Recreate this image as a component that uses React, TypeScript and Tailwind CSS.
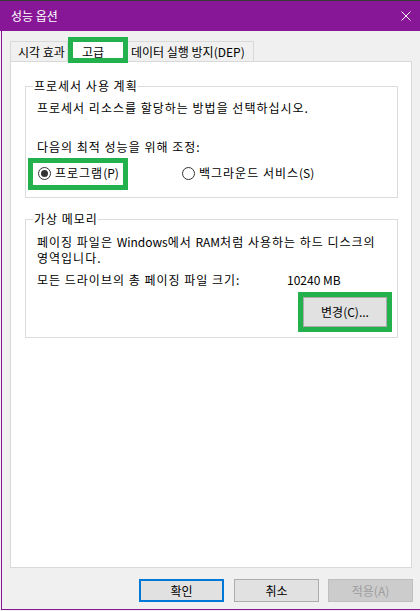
import React from 'react';

interface RadioProps {
  checked?: boolean;
  label: string;
  accel: string;
}

const Radio: React.FC<RadioProps> = ({ checked, label, accel }) => (
  <div className="flex items-center">
    <span className="ml-px flex h-[13px] w-[13px] items-center justify-center rounded-full border border-[#333333] bg-white">
      {checked && <span className="h-[7px] w-[7px] rounded-full bg-[#333333]" />}
    </span>
    <span className="ml-[4px] leading-[16px]">
      {label}
      <span className="tracking-normal">{accel}</span>
    </span>
  </div>
);

interface GroupProps {
  title: string;
  className: string;
  children: React.ReactNode;
}

const Group: React.FC<GroupProps> = ({ title, className, children }) => (
  <div className={`relative w-[373px] border border-[#dcdcdc] pl-[11px] ${className}`}>
    <span className="absolute -top-[9px] left-[7px] bg-white pl-px pr-0 leading-[16px]">{title}</span>
    {children}
  </div>
);

export default function App() {
  return (
    <div className="relative flex h-[611px] w-[420px] flex-col overflow-hidden bg-[#f0f0f0] font-['Noto_Sans_CJK_KR',sans-serif] text-[12px] text-black">
      {/* title bar */}
      <div className="flex h-[31px] shrink-0 items-center justify-between border-t border-[#3a3a3a] bg-[#881798] pl-[11px] pr-[9px] text-white">
        <span className="leading-[16px]">성능 옵션</span>
        <svg width="10" height="10" viewBox="0 0 10 10" className="mb-px">
          <path d="M0.5 0.5 L9.5 9.5 M9.5 0.5 L0.5 9.5" stroke="white" strokeWidth="1" />
        </svg>
      </div>

      <div className="mb-px ml-px flex flex-1 flex-col border-b border-l border-[#881798] px-[8px]">
        {/* tabs */}
        <div className="mt-[8px] flex h-[22px] items-end">
          <div className="h-[20px] w-[58px] border border-b-0 border-[#d9d9d9] pl-[7px] leading-[19px]">시각 효과</div>
          <div className="relative z-10 -mb-px h-[23px] w-[60px] border border-b-0 border-[#d9d9d9] bg-white pl-[13px] pt-[4px] leading-[16px]">
            고급
          </div>
          <div className="h-[20px] w-[126px] border border-b-0 border-l-0 border-[#d9d9d9] pl-[3px] leading-[19px]">
            데이터 실행 방지(DEP)
          </div>
        </div>

        {/* tab panel */}
        <div className="h-[507px] border border-[#d9d9d9] bg-white pl-[14px] pt-[24px] tracking-[1px]">
          <Group title="프로세서 사용 계획" className="h-[112px]">
            <p className="mt-[13px] leading-[16px]">프로세서 리소스를 할당하는 방법을 선택하십시오.</p>
            <p className="mt-[23px] leading-[16px]">다음의 최적 성능을 위해 조정:</p>
            <div className="mt-[10px] flex h-[16px] items-center">
              <div className="w-[144px]">
                <Radio checked label="프로그램" accel="(P)" />
              </div>
              <Radio label="백그라운드 서비스" accel="(S)" />
            </div>
          </Group>

          <Group title="가상 메모리" className="mt-[21px] h-[119px]">
            <p className="mt-[14px] leading-[16px]">
              페이징 파일은 <span className="tracking-normal">Windows</span>에서{' '}
              <span className="tracking-normal">RAM</span>처럼 사용하는 하드 디스크의
              <br />
              영역입니다.
            </p>
            <div className="mt-[6px] flex leading-[16px]">
              <span className="w-[250px]">모든 드라이브의 총 페이징 파일 크기:</span>
              <span className="tracking-normal">10240 MB</span>
            </div>
            <div className="mt-[4px] flex justify-end pr-[5px]">
              <div className="border-[5px] border-[#22b14c]">
                <button className="block h-[30px] w-[84px] border border-[#adadad] bg-[#e1e1e1] leading-[16px] tracking-normal">
                  변경(C)...
                </button>
              </div>
            </div>
          </Group>
        </div>

        {/* dialog buttons */}
        <div className="-mr-px mt-[11px] flex justify-end">
          <button className="h-[23px] w-[85px] border-2 border-[#0078d7] bg-[#e1e1e1] leading-[16px]">확인</button>
          <button className="ml-[10px] h-[23px] w-[85px] border border-[#adadad] bg-[#e1e1e1] leading-[16px]">취소</button>
          <button className="ml-[9px] h-[23px] w-[85px] border border-[#bfbfbf] bg-[#cccccc] leading-[16px] text-[#9d9d9d]">
            적용(A)
          </button>
        </div>
      </div>

      {/* annotation boxes */}
      <div className="pointer-events-none absolute left-[68px] top-[37px] z-20 h-[26px] w-[60px] border-[5px] border-[#22b14c]" />
      <div className="pointer-events-none absolute left-[28px] top-[158px] z-20 h-[32px] w-[100px] border-[5px] border-[#22b14c]" />
    </div>
  );
}
